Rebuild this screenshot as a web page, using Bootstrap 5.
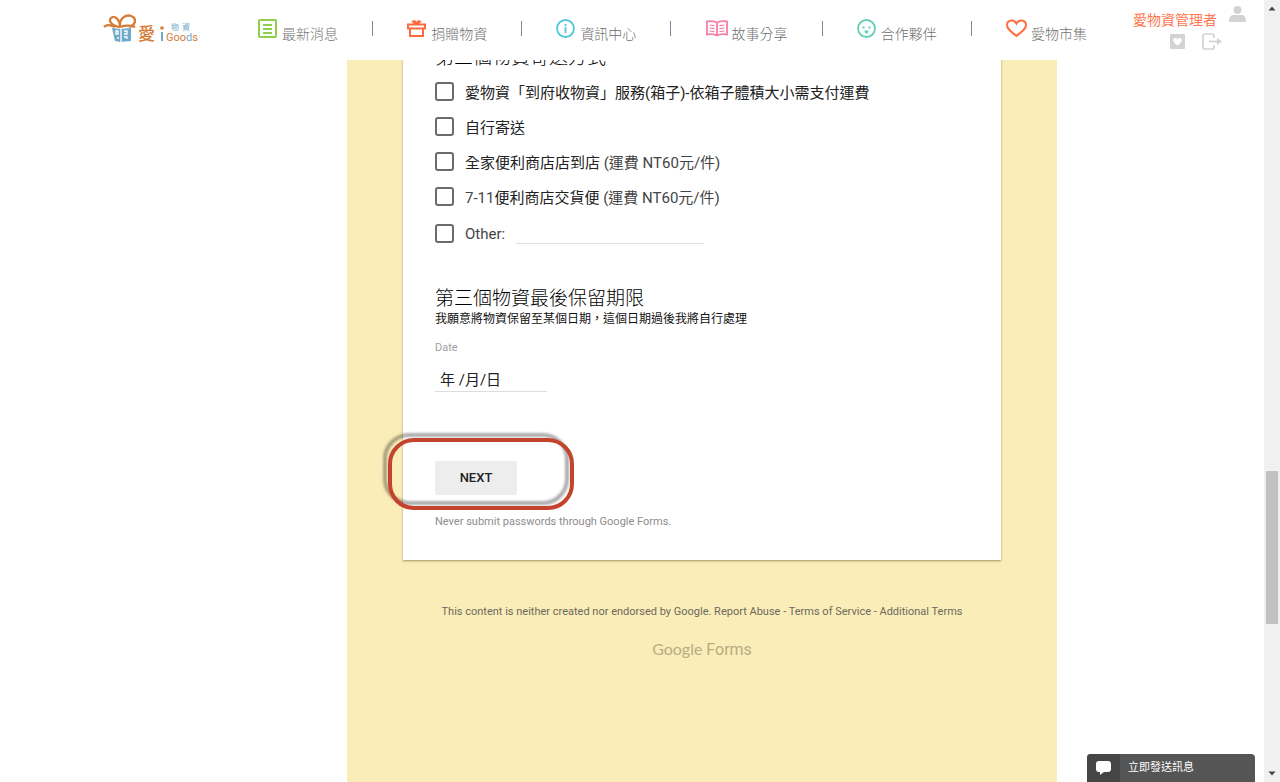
<!DOCTYPE html>
<html lang="zh-Hant">
<head>
<meta charset="utf-8">
<meta name="viewport" content="width=device-width, initial-scale=1">
<title>iGoods 愛物資</title>
<link rel="stylesheet" href="https://cdn.jsdelivr.net/npm/bootstrap@5.3.0/dist/css/bootstrap.min.css">
<style>
body{font-family:Roboto,"Noto Sans CJK TC",sans-serif;font-size:15px;line-height:20px;color:#222;padding-right:16px;background:#fff}
a{text-decoration:none}
.site-header{height:60px;padding:0 18px 0 103px;right:16px;background:#fff}
.brand-link{margin-right:59px}
.nav-link-item{color:#707070;font-size:14px;font-weight:300;gap:4px}
.nav-link-item svg{margin-bottom:3px}
.nav-link-item span{padding-top:8px}
.nav-sep{width:1px;height:15px;background:#7f8798;margin-bottom:4px}
.account{margin-left:46px}
.account-name{color:#ff7650;font-size:14px;padding-top:11px;line-height:19px}
.account-tools{padding-top:3px}
.page-grid{display:grid;grid-template-columns:347fr 710px 207fr;min-height:100vh}
.form-col{grid-column:2;background:#faedb8;padding:0 56px}
.form-sheet{background:#fff;padding:46px 32px 30px;box-shadow:0 1px 2px rgba(90,75,20,.55)}
.q-title{font-size:19px;line-height:24px;font-weight:300;color:#000;margin:0}
.q-next{margin-top:36px}
.q-help{font-size:12px;line-height:16px;color:#111;margin:0}
.opt{height:35px;gap:11px}
.opt.form-check{padding:0;margin:0}
.opt .form-check-input{float:none;margin:0;width:19px;height:19px;border:2px solid #6b6b6b;border-radius:3px}
.opt label{color:#222;font-weight:400;padding-top:2px}
.opt .latin{color:#444}
.opt-other{padding-top:2px!important;height:37px}
.opt label.latin{padding-top:0}
.line-input{border:0;border-bottom:1px solid #ddd;background:transparent;outline:0;color:#222}
.other-input{width:188px;height:20px}
.date-input{width:112px;height:26px;padding:0 5px;margin-top:10px}
.field-label{font-size:11px;line-height:16px;color:#a0a0a0;margin-top:13px}
.next-wrap{width:82px;margin-top:69px}
.next-btn{width:82px;height:34px;border:0;border-radius:2px;background:#ededed;color:#222;font-size:13px;font-weight:500}
.ring{left:-47px;top:-23px;width:186px;height:72px;border:4px solid #c4432d;border-radius:26px;filter:drop-shadow(-5px -5px 1px rgba(0,0,0,.32));pointer-events:none}
.warn{font-size:11px;line-height:16px;color:#8d8d8d;margin-top:19px}
.legal{font-size:11px;line-height:16px;color:#6d6a5c;margin-top:44px}
.legal a{color:inherit}
.gforms{color:#b8ac84;font-size:16px;line-height:24px;margin-top:17px}
.gforms b{font-family:Lato,sans-serif;font-weight:400}
.chat-btn{right:25px;width:168px;height:28px;border:0;border-radius:4px 4px 0 0;background:#555;color:#fff;font-size:11px;overflow:hidden}
.chat-icon{width:33px;background:#454545}
.scroll-rail{width:16px;background:#f0f0f0}
.scroll-rail svg{flex:0 0 16px}
.thumb{width:12px;flex:153 0 0;background:#c1c1c1}
.before{flex:455 0 0}.after{flex:142 0 0}
</style>
</head>
<body>
<header class="site-header position-fixed top-0 start-0 d-flex z-3">
  <a class="brand-link d-block" href="#" aria-label="iGoods">
    <svg width="96" height="60" viewBox="0 0 96 60">
      <g fill="none" stroke="#d87b35" stroke-width="2.3"><path d="M1 27c3-3 6-2 11 0M17 27C9 26 5 21 8 18s9 1 9 9c-1-8 5-13 11-11s5 9-2 11M17 27c6-2 9-2 15 0"/></g>
      <path fill="#70a9ca" d="M9 28l8 1 11-1v13l-11 1-5-1z"/>
      <path stroke="#fff" stroke-width="1.3" fill="none" d="M18 28v14M13 31h2v3h-2zM21 31h3v3h-3M14 38h2M21 37h3v2"/>
      <text x="35" y="40" font-size="17" font-weight="500" fill="#d87b35">愛</text>
      <circle cx="59" cy="28" r="1.8" fill="#d87b35"/><path d="M59 32v9" stroke="#70a9ca" stroke-width="2"/>
      <text x="68" y="30" font-size="8" fill="#70a9ca">物</text><text x="79" y="30" font-size="8" fill="#70a9ca">資</text>
      <text x="63" y="41" font-size="11" fill="#d87b35">Goo<tspan fill="#70a9ca">d</tspan>s</text>
    </svg>
  </a>
  <nav class="d-flex flex-grow-1 justify-content-between align-items-center">
    <a class="nav-link-item d-flex align-items-center" href="#"><svg width="20" height="20" fill="none" stroke="#8ed04b" stroke-width="2"><rect x="1" y="1" width="17" height="17" rx="1"/><path d="M5 6h9M5 10h9M5 14h9"/></svg><span>最新消息</span></a>
    <i class="nav-sep"></i>
    <a class="nav-link-item d-flex align-items-center" href="#"><svg width="20" height="20" fill="none" stroke="#ff6a3c" stroke-width="2"><path d="M1 5.500h17v4H1zM3 10v7h13v-7M5 2l4.500 3L14 2M7 1.500l2.500 3 2.500-3"/></svg><span>捐贈物資</span></a>
    <i class="nav-sep"></i>
    <a class="nav-link-item d-flex align-items-center" href="#"><svg width="20" height="20" fill="none" stroke="#4fc9dc" stroke-width="1.800"><circle cx="9.500" cy="9.500" r="8.500"/><path d="M9.500 8v6M9.500 5v2"/></svg><span>資訊中心</span></a>
    <i class="nav-sep"></i>
    <a class="nav-link-item d-flex align-items-center" href="#"><svg width="22" height="20" fill="none" stroke="#f77fa6" stroke-width="1.800"><path d="M1 2.500q5-1 10 1 5-2 10-1v13q-5-1-10 1-5-2-10-1zM11 3v13"/><path stroke-width="1.200" d="M3.500 6l5 .7M3.500 9l5 .7M3.500 12l5 .7M18.500 6l-5 .7M18.500 9l-5 .7M18.500 12l-5 .7"/></svg><span>故事分享</span></a>
    <i class="nav-sep"></i>
    <a class="nav-link-item d-flex align-items-center" href="#"><svg width="20" height="20" fill="none" stroke="#62cfb5" stroke-width="1.800"><circle cx="9.500" cy="9.500" r="8.500"/><path fill="#62cfb5" stroke="none" d="M5.500 7.500h2v2h-2zM11.500 7.500h2v2h-2zM7.500 11.500h4q0 3-2 3t-2-3z"/></svg><span>合作夥伴</span></a>
    <i class="nav-sep"></i>
    <a class="nav-link-item d-flex align-items-center" href="#"><svg width="21" height="20" fill="none" stroke="#ff7043" stroke-width="2"><path d="M10.500 17C5 12.500 1 10 1 6c0-5 7-6.500 9.500-1.500C13 -.5 20 1 20 6c0 4-4 6.500-9.500 11z"/></svg><span>愛物市集</span></a>
  </nav>
  <div class="account">
    <div class="d-flex gap-2">
      <a class="account-name" href="#">愛物資管理者</a>
      <a class="ms-1" href="#" aria-label="會員"><svg class="d-block mt-1" width="17" height="20" fill="#d3d3d3"><circle cx="8.500" cy="6" r="4"/><path d="M0 18q0-7 4-7h9q4 0 4 7z"/></svg></a>
    </div>
    <div class="account-tools d-flex justify-content-end gap-3 pe-4">
      <a href="#" aria-label="收藏"><svg class="d-block" width="17" height="17"><rect x="1" y="1" width="15" height="15" rx="1" fill="#d3d3d3"/><path fill="#fff" d="M8.500 12.500C6 10.500 4 9 4 7.200c0-2.500 3.500-3 4.500-.7 1-2.300 4.500-1.800 4.500.7 0 1.800-2 3.300-4.500 5.300z"/></svg></a>
      <a href="#" aria-label="登出"><svg class="d-block" width="20" height="17" fill="none" stroke="#d3d3d3" stroke-width="1.700"><path d="M12 5V3q0-2-2-2H3Q1 1 1 3v11q0 2 2 2h7q2 0 2-2v-2"/><path d="M7 8.500h9"/><path fill="#d3d3d3" stroke="none" d="M15 5l5 3.500-5 3.500z"/></svg></a>
    </div>
  </div>
</header>

<main class="page-grid">
  <div class="form-col">
    <form class="form-sheet" onsubmit="return false">
      <h2 class="q-title">第三個物資寄送方式</h2>
      <div class="pt-1">
        <div class="opt form-check d-flex align-items-center"><input class="form-check-input" type="checkbox" id="o1"><label for="o1">愛物資「到府收物資」服務(箱子)-依箱子體積大小需支付運費</label></div>
        <div class="opt form-check d-flex align-items-center"><input class="form-check-input" type="checkbox" id="o2"><label for="o2">自行寄送</label></div>
        <div class="opt form-check d-flex align-items-center"><input class="form-check-input" type="checkbox" id="o3"><label for="o3">全家便利商店店到店 <span class="latin">(運費 NT60元/件)</span></label></div>
        <div class="opt form-check d-flex align-items-center"><input class="form-check-input" type="checkbox" id="o4"><label for="o4"><span class="latin">7-11</span>便利商店交貨便 <span class="latin">(運費 NT60元/件)</span></label></div>
        <div class="opt opt-other form-check d-flex align-items-center"><input class="form-check-input" type="checkbox" id="o5"><label class="latin" for="o5">Other:</label><input class="line-input other-input" type="text" aria-label="Other"></div>
      </div>
      <h2 class="q-title q-next">第三個物資最後保留期限</h2>
      <p class="q-help">我願意將物資保留至某個日期，這個日期過後我將自行處理</p>
      <label class="field-label d-block" for="dt">Date</label>
      <input class="line-input date-input d-block" type="text" id="dt" value="年 /月/日">
      <div class="next-wrap position-relative">
        <button class="next-btn d-block" type="submit">NEXT</button>
        <div class="ring position-absolute"></div>
      </div>
      <div class="warn">Never submit passwords through Google Forms.</div>
    </form>
    <div class="legal text-center">This content is neither created nor endorsed by Google. <a href="#">Report Abuse</a> - <a href="#">Terms of Service</a> - <a href="#">Additional Terms</a></div>
    <div class="gforms text-center"><b>Google</b> Forms</div>
  </div>
</main>

<button class="chat-btn position-fixed bottom-0 d-flex p-0 align-items-stretch z-3" type="button">
  <span class="chat-icon d-flex align-items-center justify-content-center"><svg width="17" height="16" fill="#fff"><path d="M4 1h9q3 0 3 3v5q0 3-3 3H9l-4 3v-3H4q-3 0-3-3V4q0-3 3-3z"/></svg></span>
  <span class="align-self-center ps-2">立即發送訊息</span>
</button>
<div class="scroll-rail position-fixed top-0 end-0 vh-100 d-flex flex-column align-items-center z-3" aria-hidden="true">
  <svg width="16" height="16"><path fill="#444" d="M4.500 10.500h7L8 6.500z"/></svg>
  <div class="before"></div><div class="thumb"></div><div class="after"></div>
  <svg width="16" height="16"><path fill="#444" d="M4.500 5.500h7L8 9.500z"/></svg>
</div>
<script src="https://cdn.jsdelivr.net/npm/bootstrap@5.3.0/dist/js/bootstrap.bundle.min.js"></script>
</body>
</html>
